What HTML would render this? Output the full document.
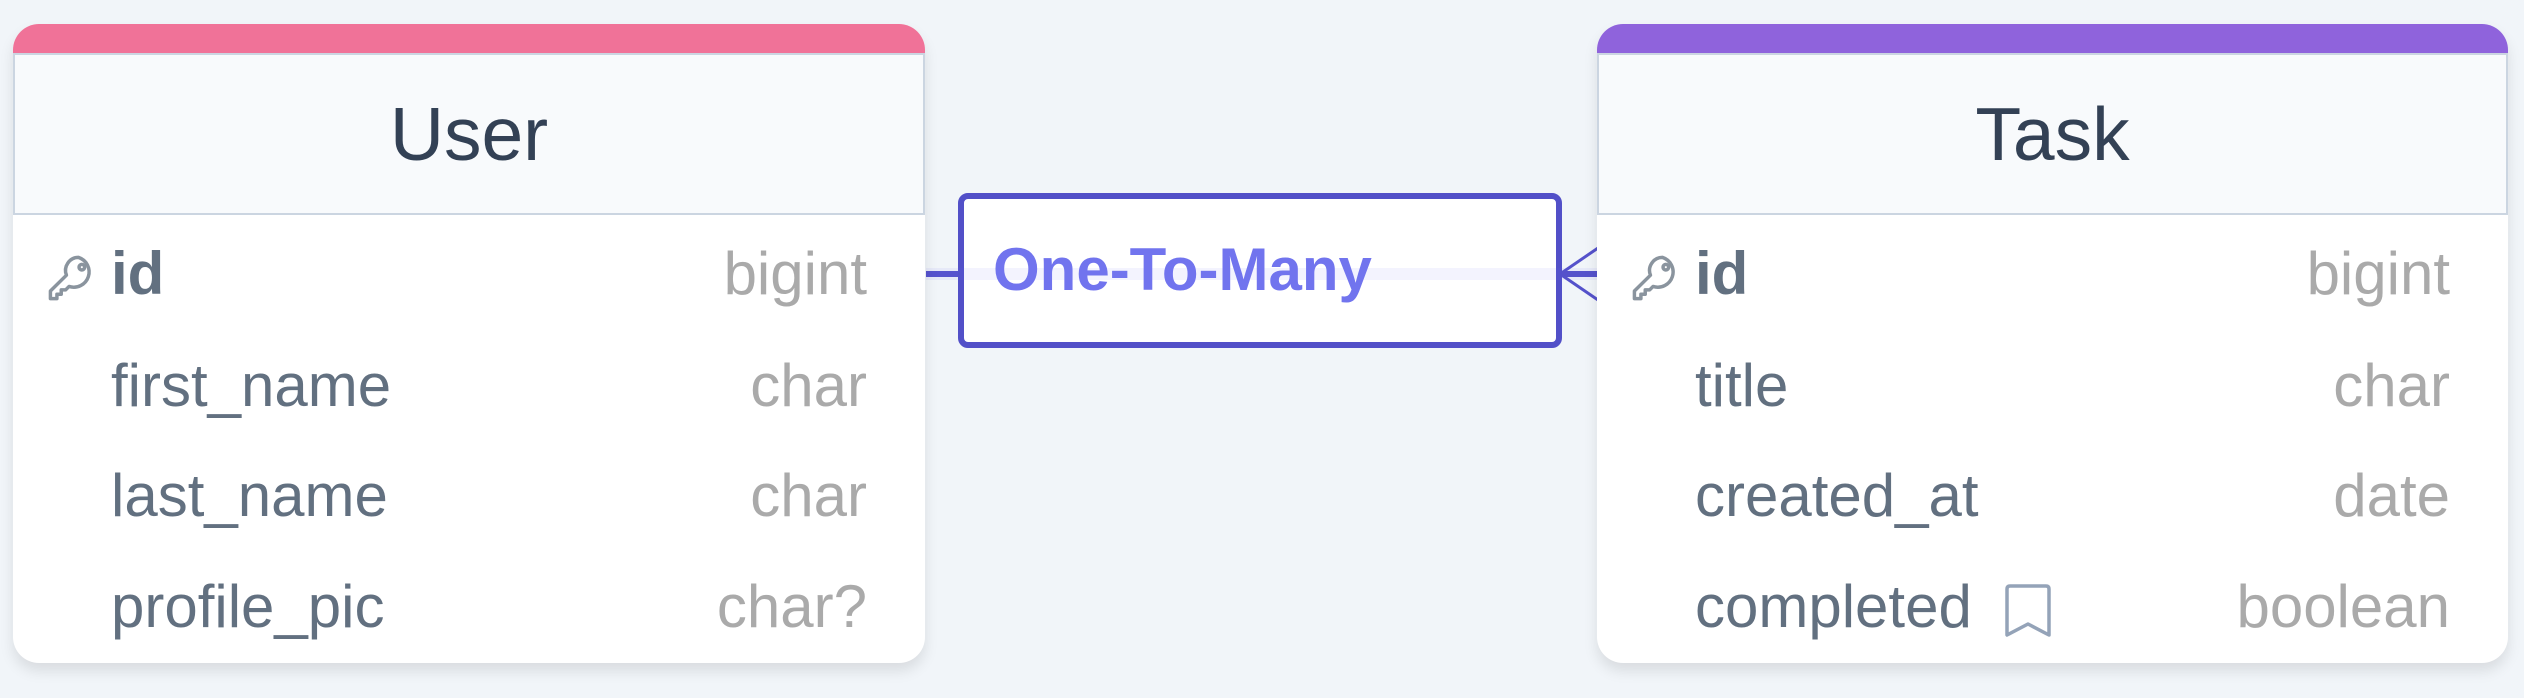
<!DOCTYPE html>
<html><head><meta charset="utf-8"><style>
html,body{margin:0;padding:0}
body{width:2524px;height:698px;background:#f1f5f9;position:relative;overflow:hidden;font-family:"Liberation Sans",sans-serif}
.card{position:absolute;top:24px;width:912px;height:639px;background:#fff;border-radius:26px;box-shadow:0 8px 14px rgba(0,0,0,0.10);overflow:hidden}
.bar{position:absolute;left:0;top:0;right:0;height:29px}
.head{position:absolute;left:0;top:29px;right:0;height:162px;background:#f8fafc;border:2px solid #cbd5e1;box-sizing:border-box;display:flex;align-items:center;justify-content:center;font-size:75px;color:#334155}
.row{position:absolute;left:0;right:0;height:60px;font-size:60px;line-height:60px;color:#627080}
.row .n{position:absolute;left:98px}
.row .t{position:absolute;right:58px;color:#aaaaaa}
.row b{color:#627080}
.key{position:absolute;left:32px;top:8px}
</style></head><body>

<div style="position:absolute;left:926px;top:271px;width:34px;height:6px;background:#5552cb"></div>
<div style="position:absolute;left:926px;top:268px;width:672px;height:12px;background:rgba(99,102,241,0.08)"></div>
<div style="position:absolute;left:1560px;top:271px;width:38px;height:6px;background:#5552cb"></div>
<svg style="position:absolute;left:1555px;top:240px" width="45" height="70"><path d="M43 8 L5 34 L43 60" stroke="#5552cb" stroke-width="3" fill="none"/></svg>

<div style="position:absolute;left:958px;top:193px;width:604px;height:155px;box-sizing:border-box;border:6px solid #5250c8;border-radius:10px;background:#fff"></div>
<div style="position:absolute;left:958px;top:268px;width:604px;height:12px;background:rgba(99,102,241,0.08)"></div>
<div style="position:absolute;left:993px;top:240px;font-size:60px;font-weight:bold;color:#7174ee;line-height:60px">One-To-Many</div>

<div class="card" style="left:13px">
  <div class="bar" style="background:#f07298"></div>
  <div class="head">User</div>
  <div class="row" style="top:220px"><svg class="key" width="52" height="52" viewBox="0 0 24 24" fill="none" stroke="#8a949e" stroke-width="1.6" stroke-linejoin="round"><path d="M15.5 2.5a6 6 0 0 0-5.6 8.2L2.5 18v3.5h3v-2h2v-2h2l1.6-1.6A6 6 0 1 0 15.5 2.5z"/><circle cx="17" cy="7" r="1.3"/></svg><span class="n"><b>id</b></span><span class="t">bigint</span></div>
  <div class="row" style="top:332px"><span class="n">first_name</span><span class="t">char</span></div>
  <div class="row" style="top:442px"><span class="n">last_name</span><span class="t">char</span></div>
  <div class="row" style="top:553px"><span class="n">profile_pic</span><span class="t">char?</span></div>
</div>

<div class="card" style="left:1597px;width:911px">
  <div class="bar" style="background:#8f63dc"></div>
  <div class="head">Task</div>
  <div class="row" style="top:220px"><svg class="key" width="52" height="52" viewBox="0 0 24 24" fill="none" stroke="#8a949e" stroke-width="1.6" stroke-linejoin="round"><path d="M15.5 2.5a6 6 0 0 0-5.6 8.2L2.5 18v3.5h3v-2h2v-2h2l1.6-1.6A6 6 0 1 0 15.5 2.5z"/><circle cx="17" cy="7" r="1.3"/></svg><span class="n"><b>id</b></span><span class="t">bigint</span></div>
  <div class="row" style="top:332px"><span class="n">title</span><span class="t">char</span></div>
  <div class="row" style="top:442px"><span class="n">created_at</span><span class="t">date</span></div>
  <div class="row" style="top:553px"><span class="n">completed</span><span class="t">boolean</span>
    <svg style="position:absolute;left:406px;top:6px" width="50" height="56" viewBox="0 0 50 56"><path d="M4 6 Q4 3 7 3 H43 Q46 3 46 6 V52 L25 41 L4 52 Z" fill="none" stroke="#94a3b8" stroke-width="3.5" stroke-linejoin="round"/></svg>
  </div>
</div>
</body></html>
